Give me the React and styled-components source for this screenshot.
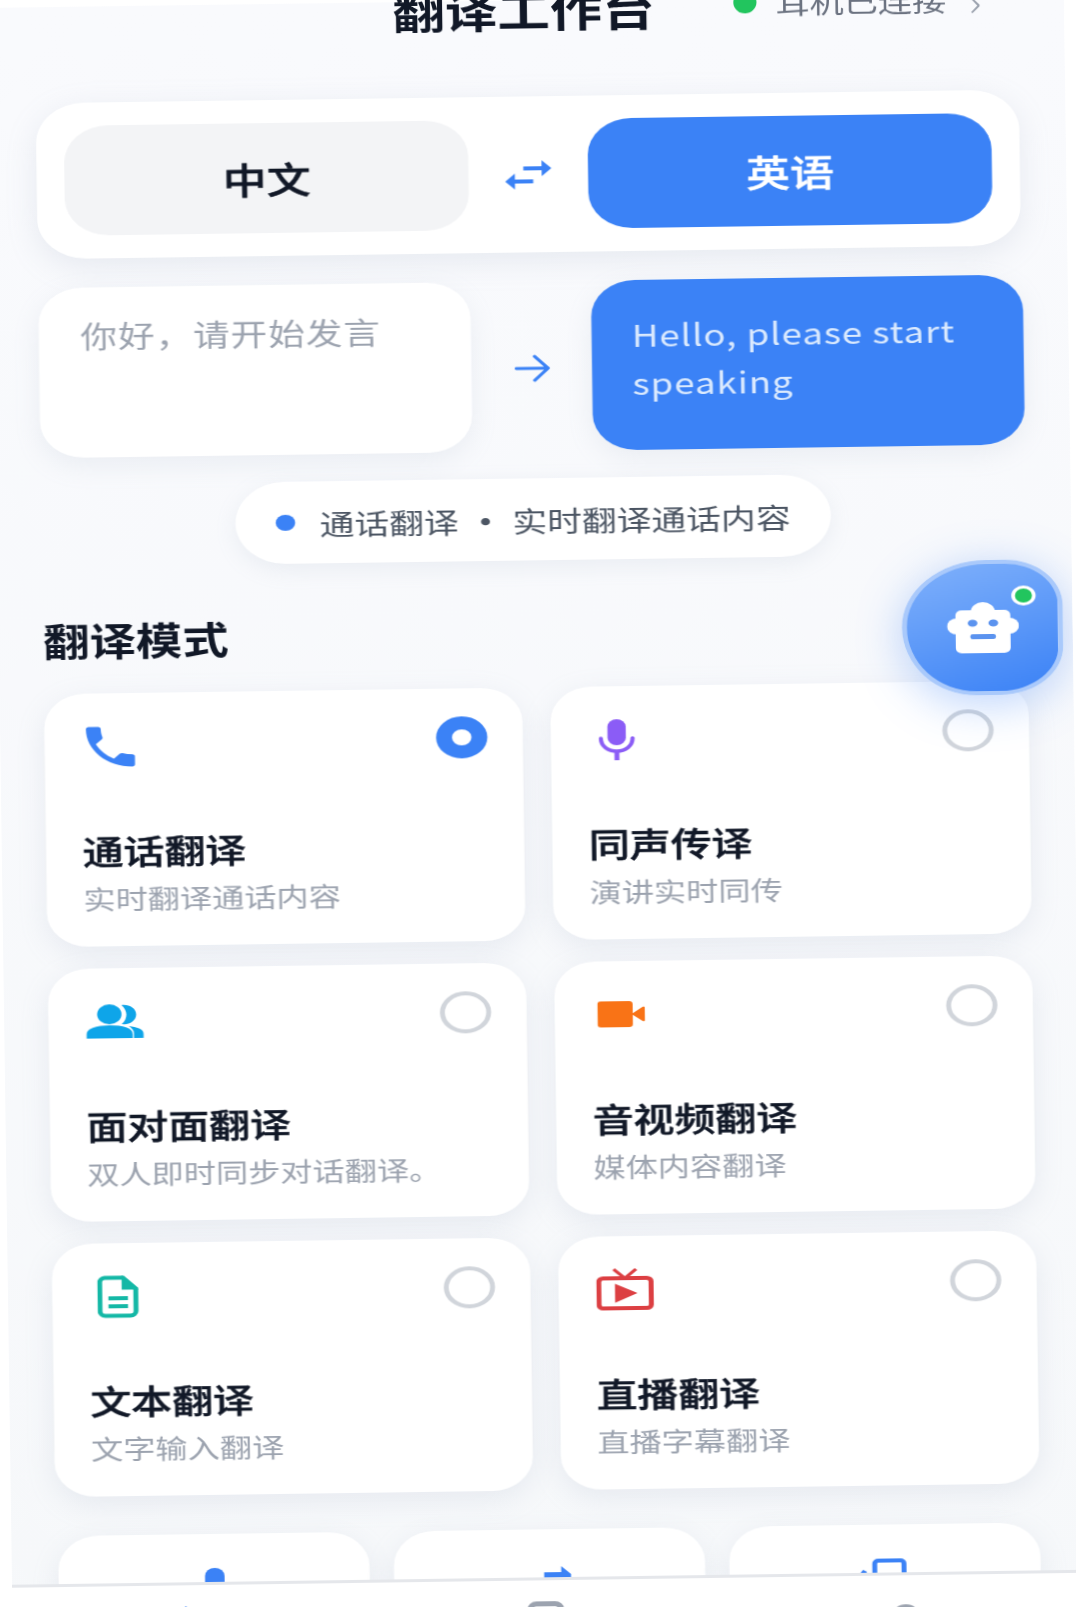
import React from "react";
import styled, { createGlobalStyle } from "styled-components";

const Global = createGlobalStyle`
  html, body {
    margin: 0;
    height: 1607px;
    overflow: hidden;
    background: #fff;
  }
  * { box-sizing: border-box; }
`;

const PhoneIcon = () => (
  <svg width="40" height="41" viewBox="3 3 18 18" fill="#3b82f6">
    <path d="M6.62 10.79c1.44 2.83 3.76 5.14 6.59 6.59l2.2-2.2c.27-.27.67-.36 1.02-.24 1.12.37 2.33.57 3.57.57.55 0 1 .45 1 1V20c0 .55-.45 1-1 1-9.39 0-17-7.61-17-17 0-.55.45-1 1-1h3.5c.55 0 1 .45 1 1 0 1.25.2 2.45.57 3.57.11.35.03.74-.25 1.02l-2.2 2.2z" />
  </svg>
);

const MicIcon = () => (
  <svg width="30" height="41" viewBox="0 0 30 41">
    <rect x="7.5" y="0" width="15" height="26" rx="7.5" fill="#8b5cf6" />
    <path d="M2 19c0 8 6 13 13 13s13-5 13-13" fill="none" stroke="#8b5cf6" strokeWidth="3.4" strokeLinecap="round" />
    <rect x="13" y="31" width="4" height="10" fill="#8b5cf6" />
  </svg>
);

const PeopleIcon = () => (
  <svg width="47" height="34" viewBox="0 0 47 34" fill="#0ea5e9">
    <circle cx="19" cy="10" r="10" />
    <path d="M0 34v-4c0-6 8-9 19-9s19 3 19 9v4z" />
    <path d="M29 1c6-1 12 3 12 9.500s-6 10.500-12 9.500c2.500-2.500 4-6 4-9.500s-1.500-7-4-9.500z" />
    <path d="M35 22c6 1 12 3 12 8v4h-8v-5c0-3-2-5-4-7z" />
  </svg>
);

const VideoIcon = () => (
  <svg width="39" height="26" viewBox="0 0 39 26" fill="#f97316">
    <rect x="0" y="0" width="29" height="26" rx="3" />
    <path d="M28 13l9-7c1-.7 2 0 2 1v12c0 1-1 1.700-2 1z" />
  </svg>
);

const DocIcon = () => (
  <svg width="34" height="43" viewBox="0 0 34 43" fill="none" stroke="#14b8a6">
    <path d="M6 2.500h15l10.500 11V36a4.500 4.500 0 0 1-4.500 4.500H6.500A4.500 4.500 0 0 1 2 36V7a4.500 4.500 0 0 1 4-4.500z" strokeWidth="4" />
    <path d="M21 2.500l10.500 11H21z" fill="#14b8a6" strokeWidth="2" />
    <path d="M9 23h16M9 31h16" strokeWidth="4" />
  </svg>
);

const TvIcon = () => (
  <svg width="47" height="42" viewBox="0 0 46 42" fill="none" stroke="#dc3f42" preserveAspectRatio="none">
    <rect x="2" y="10" width="42" height="30" rx="3.500" strokeWidth="4" />
    <path d="M14 1l9 9 9-9" strokeWidth="2.800" />
    <path d="M15 15.500l18 9.500-18 9.500z" fill="#dc3f42" stroke="none" />
  </svg>
);

const SwapIcon = () => (
  <svg width="38" height="29" viewBox="0 0 38 29" fill="#3b82f6">
    <path d="M15 6h15V0l8 8-8 8v-6H15z" />
    <path d="M23 19H8v-6l-8 8 8 8v-6h15z" />
  </svg>
);

const ArrowIcon = () => (
  <svg width="30" height="28" viewBox="0 0 30 28" fill="none" stroke="#3b82f6" strokeWidth="2.800" strokeLinecap="round" strokeLinejoin="round">
    <path d="M2 14h26M17 2l11 12-11 12" />
  </svg>
);

const RobotIcon = () => (
  <svg width="59" height="51" viewBox="0 0 59 51">
    <circle cx="29.500" cy="10" r="10" fill="#fff" />
    <rect x="7" y="8" width="45" height="43" rx="5" fill="#fff" />
    <circle cx="8" cy="24" r="8" fill="#fff" />
    <circle cx="51" cy="24" r="8" fill="#fff" />
    <ellipse cx="21" cy="21" rx="4" ry="3.500" fill="#5b93ef" />
    <ellipse cx="38" cy="21" rx="4" ry="3.500" fill="#5b93ef" />
    <rect x="19" y="32" width="21" height="5" rx="2" fill="#5b93ef" />
  </svg>
);

const MODES = [
  { title: "通话翻译", sub: "实时翻译通话内容", icon: <PhoneIcon />, active: true },
  { title: "同声传译", sub: "演讲实时同传", icon: <MicIcon /> },
  { title: "面对面翻译", sub: "双人即时同步对话翻译。", icon: <PeopleIcon /> },
  { title: "音视频翻译", sub: "媒体内容翻译", icon: <VideoIcon /> },
  { title: "文本翻译", sub: "文字输入翻译", icon: <DocIcon /> },
  { title: "直播翻译", sub: "直播字幕翻译", icon: <TvIcon /> },
];

const App = () => {
  return (
    <Page>
      <Global />
      <Header>
        <span />
        <Title>翻译工作台</Title>
        <Status>
          <GreenDot />
          耳机已连接
          <Chevron>›</Chevron>
        </Status>
      </Header>
      <Scroller>
        <LangPanel>
          <LangButton>中文</LangButton>
          <Center><SwapIcon /></Center>
          <LangButton $active>英语</LangButton>
        </LangPanel>
        <Speech>
          <Bubble>你好，请开始发言</Bubble>
          <Center><ArrowIcon /></Center>
          <Bubble $active>Hello, please start speaking</Bubble>
        </Speech>
        <PillRow>
          <Pill>
            <PillDot />
            <span>通话翻译</span>
            <PillSep>·</PillSep>
            <span>实时翻译通话内容</span>
          </Pill>
        </PillRow>
        <SectionTitle>翻译模式</SectionTitle>
        <Grid>
          {MODES.map((m) => (
            <Card key={m.title}>
              <IconSlot>{m.icon}</IconSlot>
              <Radio $active={m.active} />
              <CardTitle>{m.title}</CardTitle>
              <CardSub>{m.sub}</CardSub>
            </Card>
          ))}
        </Grid>
        <MiniGrid>
          <MiniCard>
            <svg width="18" height="40" viewBox="0 0 18 40"><rect x="1" width="16" height="40" rx="8" fill="#3b82f6" /></svg>
          </MiniCard>
          <MiniCard>
            <svg width="40" height="40" viewBox="0 0 40 40" fill="#3b82f6"><path d="M15 9h14V3l8 8v9H15z" /></svg>
          </MiniCard>
          <MiniCard>
            <svg width="46" height="40" viewBox="0 0 46 40" fill="none" stroke="#3b82f6" strokeWidth="4"><path d="M14 40V5a3 3 0 0 1 3-3h18a3 3 0 0 1 3 3v35" /><path d="M4 15l2-3" /></svg>
          </MiniCard>
        </MiniGrid>
      </Scroller>
      <Fab>
        <RobotIcon />
        <FabDot />
      </Fab>
      <TabBar>
        <Tab>
          <svg width="44" height="40" viewBox="0 0 44 40" fill="#3b82f6"><path d="M22 0L2 18h6v22h28V18h6z" /></svg>
        </Tab>
        <Tab>
          <svg width="30" height="40" viewBox="0 0 30 40" fill="none" stroke="#9ca3af" strokeWidth="5"><rect x="2.500" y="2.500" width="25" height="35" rx="5" /></svg>
        </Tab>
        <Tab $drop>
          <svg width="44" height="40" viewBox="0 0 44 40" fill="#9ca3af"><circle cx="22" cy="11" r="11" /></svg>
        </Tab>
      </TabBar>
    </Page>
  );
};

export default App;

/* the shot is slightly tilted, stretched sideways and soft, so the whole page is too */
const Page = styled.div`
  position: relative;
  display: flow-root;
  width: 886px;
  height: 1720px;
  margin: 8px 0 0 -17px;
  transform-origin: 0 0;
  transform: rotate(-0.8deg) scaleX(1.22);
  clip-path: inset(-30px 0 0 6px);
  filter: blur(0.4px);
  background: linear-gradient(#f9fafd, #f6f8fa);
  font-family: "Noto Sans CJK SC", "Noto Sans", sans-serif;
  color: #111827;
`;

const Header = styled.header`
  display: grid;
  grid-template-columns: 1fr auto 1fr;
  align-items: start;
  height: 48px;
  margin-top: -14px;
`;

const Title = styled.h1`
  margin: 0;
  font-size: 43px;
  line-height: 44px;
  font-weight: 700;
`;

const Status = styled.div`
  display: flex;
  align-items: center;
  height: 30px;
  margin-top: 4px;
  padding-left: 64px;
  font-size: 28px;
  color: #6b7280;
  white-space: nowrap;
`;

const GreenDot = styled.i`
  width: 19px;
  height: 22px;
  margin-right: 16px;
  border-radius: 50%;
  background: #22c55e;
`;

const Chevron = styled.span`
  margin-left: 18px;
  font-size: 38px;
  font-weight: 300;
  color: #9ca3af;
`;

const Scroller = styled.main`
  height: 1543px;
  padding: 62px 38px 0 42px;
  overflow: hidden;
`;

const LangPanel = styled.section`
  display: grid;
  grid-template-columns: 331px 1fr 331px;
  height: 156px;
  padding: 23px;
  border-radius: 40px;
  background: #fff;
  box-shadow: 0 8px 28px rgba(148, 163, 184, 0.18);
`;

const LangButton = styled.div`
  display: flex;
  align-items: center;
  justify-content: center;
  border-radius: 36px;
  font-size: 36px;
  font-weight: 500;
  -webkit-text-stroke: 0.5px currentColor;
  background: ${(p) => (p.$active ? "#3b82f6" : "#f3f4f6")};
  color: ${(p) => (p.$active ? "#fff" : "#111827")};
`;

const Center = styled.div`
  display: flex;
  align-items: center;
  justify-content: center;
`;

const Speech = styled.section`
  display: grid;
  grid-template-columns: 354px 1fr 354px;
  height: 170px;
  margin: 29px -1px 0 0;

  ${Center} {
    padding-top: 4px;
  }
`;

const Bubble = styled.div`
  padding: ${(p) => (p.$active ? "30px 33px" : "27px 34px")};
  border-radius: 36px;
  font-size: 30px;
  line-height: ${(p) => (p.$active ? "48px" : "40px")};
  letter-spacing: 0.8px;
  background: ${(p) => (p.$active ? "#3b82f6" : "#fff")};
  color: ${(p) => (p.$active ? "#dbeafe" : "#9ca3af")};
  box-shadow: 0 8px 24px rgba(148, 163, 184, 0.14);
`;

const PillRow = styled.div`
  display: flex;
  justify-content: center;
  margin-top: 27px;
`;

const Pill = styled.div`
  display: flex;
  align-items: center;
  height: 82px;
  padding: 0 33px;
  border-radius: 41px;
  background: #fff;
  font-size: 28.500px;
  color: #4b5563;
  white-space: nowrap;
  box-shadow: 0 6px 20px rgba(148, 163, 184, 0.14);
`;

const PillDot = styled.i`
  width: 16px;
  height: 16px;
  margin-right: 20px;
  border-radius: 50%;
  background: #3b82f6;
`;

const PillSep = styled.b`
  width: 44px;
  text-align: center;
`;

const SectionTitle = styled.h2`
  margin: 49px 0 30px;
  font-size: 38px;
  line-height: 48px;
  font-weight: 700;
`;

const Grid = styled.div`
  display: grid;
  grid-template-columns: 1fr 1fr;
  gap: 22.500px 23px;
  margin-right: -1px;
`;

const Card = styled.article`
  position: relative;
  height: 252.500px;
  padding: 29px 30px 0;
  border-radius: 34px;
  background: #fff;
  box-shadow: 0 8px 26px rgba(148, 163, 184, 0.16);
`;

const IconSlot = styled.div`
  display: flex;
  align-items: center;
  justify-content: center;
  width: 48px;
  height: 48px;
`;

const Radio = styled.span`
  position: absolute;
  top: 28px;
  right: 29px;
  width: 42px;
  height: 42px;
  border-radius: 50%;
  border: ${(p) => (p.$active ? "13px solid #3b82f6" : "4px solid #d1d5db")};
  background: #fff;
`;

const CardTitle = styled.h3`
  margin: 58px 0 0;
  font-size: 33.500px;
  line-height: 44px;
  font-weight: 500;
  -webkit-text-stroke: 0.5px currentColor;
  color: #111827;
`;

const CardSub = styled.p`
  margin: 9px 0 0;
  font-size: 26.400px;
  line-height: 34px;
  color: #9ca3af;
`;

const MiniGrid = styled.div`
  display: grid;
  grid-template-columns: repeat(3, 1fr);
  gap: 20px;
  margin: 39px -1px 0 2px;
`;

const MiniCard = styled.div`
  display: flex;
  justify-content: center;
  height: 250px;
  padding-top: 34px;
  border-radius: 34px;
  background: #fff;
  box-shadow: 0 8px 26px rgba(148, 163, 184, 0.16);
`;

const Fab = styled.div`
  position: absolute;
  top: 566px;
  left: 746px;
  display: flex;
  align-items: center;
  justify-content: center;
  width: 132px;
  height: 135px;
  border: 4px solid #a9c9fb;
  border-radius: 62% 42% 46% 54% / 58% 40% 42% 60%;
  background: linear-gradient(160deg, #80b1fb, #3b82f6);
  box-shadow: 0 8px 40px rgba(59, 130, 246, 0.35);
`;

const FabDot = styled.i`
  position: absolute;
  top: 22px;
  left: 86px;
  width: 20px;
  height: 20px;
  border: 3px solid #fff;
  border-radius: 50%;
  background: #22c55e;
`;

const TabBar = styled.nav`
  display: grid;
  grid-template-columns: repeat(3, 1fr);
  height: 143px;
  padding-top: 21px;
  border-top: 3px solid #e5e7eb;
  background: #fff;
`;

const Tab = styled.div`
  display: flex;
  justify-content: center;
  padding-top: ${(p) => (p.$drop ? "8px" : "0")};
`;
